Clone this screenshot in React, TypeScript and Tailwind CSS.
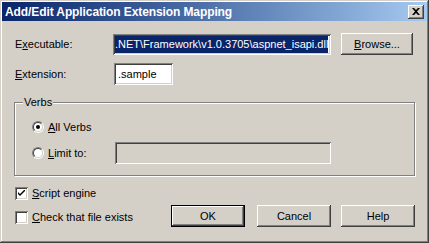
import React from "react";

const raised =
  "bg-[#d4d0c8] shadow-[inset_-1px_-1px_#404040,inset_1px_1px_#ffffff,inset_-2px_-2px_#808080]";
const sunken =
  "shadow-[inset_1px_1px_#808080,inset_-1px_-1px_#ffffff,inset_2px_2px_#404040,inset_-2px_-2px_#d4d0c8]";

function Btn({ children, w, def }: { children: React.ReactNode; w: string; def?: boolean }) {
  if (def) {
    return (
      <div className={`${w} h-[22px] border border-black flex`}>
        <div className={`flex-1 flex items-center justify-center ${raised}`}>{children}</div>
      </div>
    );
  }
  return <div className={`${w} h-[22px] flex items-center justify-center ${raised}`}>{children}</div>;
}

function Radio({ checked }: { checked?: boolean }) {
  return (
    <div className="w-[12px] h-[12px] rounded-full border border-t-[#808080] border-l-[#808080] border-b-white border-r-white flex items-center justify-center">
      <div className="w-[10px] h-[10px] rounded-full bg-white border border-t-[#404040] border-l-[#404040] border-b-[#d4d0c8] border-r-[#d4d0c8] flex items-center justify-center">
        {checked && <div className="w-[4px] h-[4px] rounded-full bg-black" />}
      </div>
    </div>
  );
}

function Check({ checked }: { checked?: boolean }) {
  return (
    <div className={`w-[13px] h-[13px] bg-white ${sunken} flex items-center justify-center`}>
      {checked && (
        <svg width="7" height="7" viewBox="0 0 7 7">
          <path d="M0 2 L0 4 L2 6 L7 1 L7 -1 L2 4 Z" fill="#000" />
        </svg>
      )}
    </div>
  );
}

export default function App() {
  return (
    <div className="w-[429px] h-[243px] bg-[#d4d0c8] p-[2px] shadow-[inset_-1px_-1px_#404040,inset_1px_1px_#d4d0c8,inset_-2px_-2px_#808080,inset_2px_2px_#ffffff] font-['Liberation_Sans',Arial,sans-serif] text-[11px] text-black flex flex-col leading-none">
      <div className="h-[19px] flex items-center justify-between pl-[3px] pr-[3px] bg-gradient-to-r from-[#0a246a] to-[#a6caf0]">
        <span className="text-white font-bold text-[12px] font-['Liberation_Sans',Arial,sans-serif] tracking-[-0.1px]">
          Add/Edit Application Extension Mapping
        </span>
        <div className={`w-[16px] h-[14px] flex items-center justify-center ${raised}`}>
          <svg width="8" height="7" viewBox="0 0 8 7">
            <path d="M0 0 L2 0 L4 2 L6 0 L8 0 L5 3.5 L8 7 L6 7 L4 5 L2 7 L0 7 L3 3.5 Z" fill="#000" />
          </svg>
        </div>
      </div>

      <div className="mt-[12px] ml-[13px] flex items-center h-[22px]">
        <div className="w-[98px]">
          E<span className="underline">x</span>ecutable:
        </div>
        <div className={`w-[218px] h-[21px] bg-white ${sunken} p-[2px] flex items-center overflow-hidden`}>
          <span className="bg-[#0a246a] text-white h-[17px] flex items-center whitespace-nowrap">
            .NET\Framework\v1.0.3705\aspnet_isapi.dll
          </span>
        </div>
        <div className="ml-[10px]">
          <Btn w="w-[72px]">
            <span>
              <span className="underline">B</span>rowse...
            </span>
          </Btn>
        </div>
      </div>

      <div className="mt-[8px] ml-[13px] flex items-center h-[22px]">
        <div className="w-[99px]">
          <span className="underline">E</span>xtension:
        </div>
        <div className={`w-[59px] h-[22px] bg-white ${sunken} px-[4px] flex items-center`}>.sample</div>
      </div>

      <div className="mt-[17px] ml-[12px] w-[401px] h-[74px] relative border border-[#808080] shadow-[inset_1px_1px_#ffffff,1px_1px_#ffffff] flex flex-col">
        <div className="absolute left-[8px] top-[-6px] bg-[#d4d0c8] px-[1px]">Verbs</div>
        <div className="mt-[18px] ml-[17px] flex items-center h-[12px]">
          <Radio checked />
          <span className="ml-[4px]">
            <span className="underline">A</span>ll Verbs
          </span>
        </div>
        <div className="mt-[9px] ml-[17px] flex items-center h-[22px]">
          <Radio />
          <span className="ml-[4px] w-[67px]">
            <span className="underline">L</span>imit to:
          </span>
          <div className={`w-[216px] h-[22px] ${sunken}`} />
        </div>
      </div>

      <div className="flex mt-[11px]">
        <div className="ml-[13px] w-[156px] flex flex-col">
          <div className="flex items-center h-[13px]">
            <Check checked />
            <span className="ml-[4px]">
              <span className="underline">S</span>cript engine
            </span>
          </div>
          <div className="flex items-center h-[13px] mt-[11px]">
            <Check />
            <span className="ml-[4px]">
              <span className="underline">C</span>heck that file exists
            </span>
          </div>
        </div>
        <div className="flex mt-[18px]">
          <Btn w="w-[74px]" def>
            OK
          </Btn>
          <div className="ml-[12px]">
            <Btn w="w-[74px]">Cancel</Btn>
          </div>
          <div className="ml-[10px]">
            <Btn w="w-[74px]">Help</Btn>
          </div>
        </div>
      </div>
    </div>
  );
}
